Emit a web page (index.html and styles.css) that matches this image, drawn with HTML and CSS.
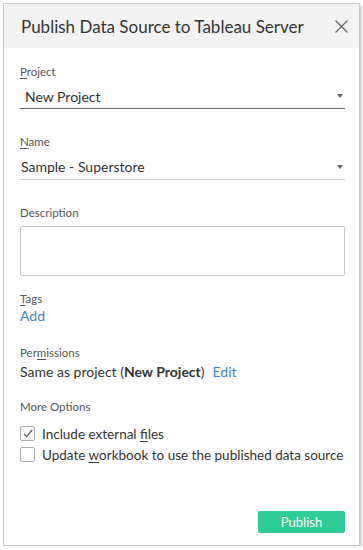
FILE: index.html
```html
<!DOCTYPE html>
<html>
<head>
<meta charset="utf-8">
<link rel="stylesheet" href="styles.css">
</head>
<body>
<div class="dialog">
  <div class="header">
    <div class="title">Publish Data Source to Tableau Server</div>
    <svg class="close" width="13" height="13" viewBox="0 0 13 13"><path d="M0.5 0.5 L12.5 12.5 M12.5 0.5 L0.5 12.5" stroke="#666" stroke-width="1.3" fill="none"/></svg>
  </div>
  <div class="content">
    <div class="field project">
      <div class="label"><u>P</u>roject</div>
      <div class="select dark"><span>New Project</span><span class="arrow"></span></div>
    </div>
    <div class="field name">
      <div class="label"><u>N</u>ame</div>
      <div class="select light"><span>Sample - Superstore</span><span class="arrow"></span></div>
    </div>
    <div class="field desc">
      <div class="label">Description</div>
      <div class="textarea"></div>
    </div>
    <div class="field tags">
      <div class="label"><u>T</u>ags</div>
      <div class="link">Add</div>
    </div>
    <div class="field perms">
      <div class="label">Per<u>m</u>issions</div>
      <div class="value">Same as project (<b>New Project</b>)<span class="link edit">Edit</span></div>
    </div>
    <div class="field options">
      <div class="label">More Options</div>
      <div class="checks">
        <div class="check"><span class="box"><svg width="10" height="9" viewBox="0 0 10 9"><path d="M1 5 L3.6 7.6 L9 1" stroke="#555" stroke-width="1.2" fill="none"/></svg></span><span class="ctext">Include external <u>f</u>iles</span></div>
        <div class="check"><span class="box"></span><span class="ctext">Update <u>w</u>orkbook to use the published data source</span></div>
      </div>
    </div>
  </div>
  <div class="footer">
    <button class="publish">Publish</button>
  </div>
</div>
</body>
</html>
```
FILE: styles.css
```css
html, body {
  margin: 0;
  padding: 0;
  background: #ffffff;
}
body {
  padding: 3px 0 0 3px;
  font-family: Lato, "Open Sans", sans-serif;
  color: #333;
}
.dialog {
  width: 355px;
  height: 541px;
  border: 1px solid #c8c8c8;
  background: #fff;
  box-shadow: 2px 3px 2px rgba(0,0,0,0.18);
  display: flex;
  flex-direction: column;
}
.header {
  height: 44px;
  background: #f3f3f3;
  display: flex;
  align-items: center;
  justify-content: space-between;
  padding: 0 11px 0 17px;
}
.title {
  font-size: 17px;
  color: #333;
}
.close { display: block; margin-top: 1px; }
.content {
  padding: 17px 14px 0 16px;
  flex: 1;
}
.field { margin-bottom: 25px; }
.label {
  font-size: 11.5px;
  color: #555;
  line-height: 14px;
}
.label u { text-decoration-thickness: 1px; text-underline-offset: 2px; }
.select {
  display: flex;
  justify-content: space-between;
  align-items: center;
  font-size: 14px;
}
.select span:first-child { padding-left: 1px; }
.select.dark { border-bottom: 1px solid #666; padding-left: 4px; height: 24px; margin-top: 5px; }
.select.light { border-bottom: 1px solid #ccc; height: 25px; margin-top: 5px; }
.field.project { margin-bottom: 26px; }
.field.name { margin-bottom: 26px; }
.arrow {
  width: 0; height: 0;
  border-left: 3.5px solid transparent;
  border-right: 3.5px solid transparent;
  border-top: 4px solid #666;
  margin-right: 2px;
}
.textarea {
  margin-top: 6px;
  height: 48px;
  border: 1px solid #c8c8c8;
  border-radius: 2px;
}
.field.desc { margin-bottom: 16px; }
.field.tags { margin-bottom: 21px; }
.field.perms { margin-bottom: 19px; }
.link { color: #4184bb; font-size: 14px; line-height: 18px; }
.value { font-size: 14px; line-height: 18px; margin-top: 3px; }
.value b { font-weight: 700; color: #333; }
.edit { display: inline; margin-left: 8px; }
.tags .link { margin-top: 1px; }
.checks { margin-top: 9px; }
.check {
  display: flex;
  align-items: center;
  font-size: 13.5px;
  height: 21px;
  white-space: nowrap;
}
.check .box {
  flex: none;
  width: 13px; height: 13px;
  border: 1px solid #aaa;
  border-radius: 2px;
  margin-right: 7px;
  display: flex;
  align-items: center;
  justify-content: center;
}
.check .box svg { display: block; }
.ctext u { text-underline-offset: 2px; }
.footer {
  display: flex;
  justify-content: flex-end;
  padding: 0 14px 12px 0;
}
.publish {
  width: 87px;
  height: 22px;
  border: none;
  border-radius: 2px;
  background: #2ecc96;
  color: #fff;
  font-family: Lato, sans-serif;
  font-size: 13px;
  padding: 0;
}
```
